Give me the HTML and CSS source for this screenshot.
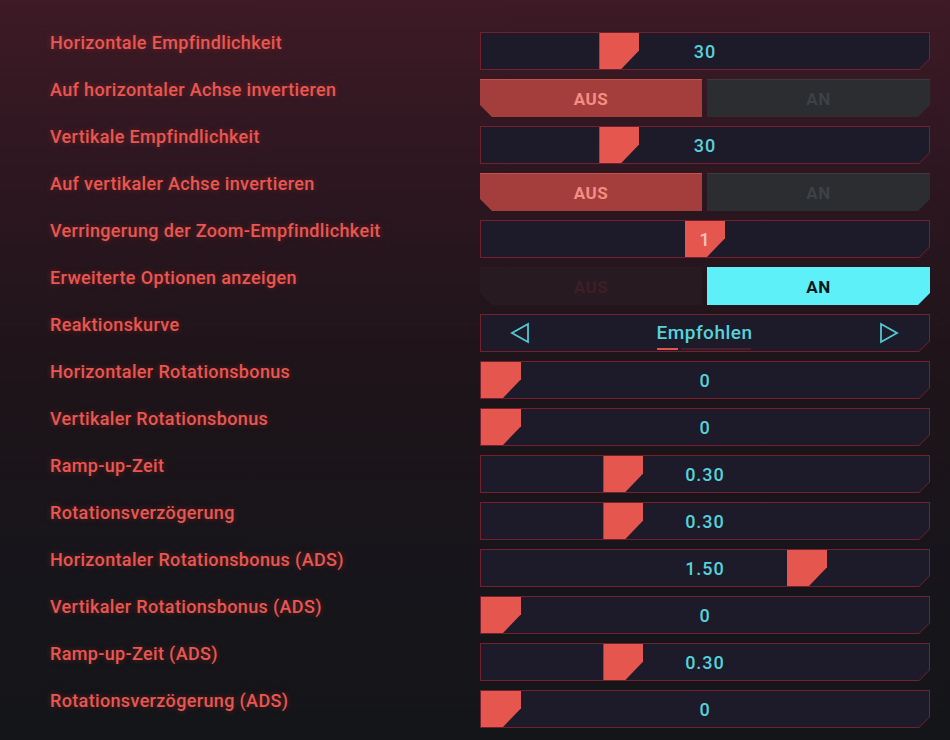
FILE: index.html
```html
<!DOCTYPE html>
<html lang="de">

<head>
    <meta charset="UTF-8">
    <meta name="viewport" content="width=device-width, initial-scale=1.0">
    <link rel="stylesheet" href="styles.css">
</head>

<body>
    <div class="settings">

        <div class="row">
            <div class="label">Horizontale Empfindlichkeit</div>
            <div class="field">
                <div class="field-in slider">
                    <div class="thumb" style="--p: 0.29"></div>
                    <span class="value">30</span>
                </div>
            </div>
        </div>

        <div class="row">
            <div class="label">Auf horizontaler Achse invertieren</div>
            <div class="toggle">
                <div class="opt opt-left off-on">AUS</div>
                <div class="opt opt-right on-off">AN</div>
            </div>
        </div>

        <div class="row">
            <div class="label">Vertikale Empfindlichkeit</div>
            <div class="field">
                <div class="field-in slider">
                    <div class="thumb" style="--p: 0.29"></div>
                    <span class="value">30</span>
                </div>
            </div>
        </div>

        <div class="row">
            <div class="label">Auf vertikaler Achse invertieren</div>
            <div class="toggle">
                <div class="opt opt-left off-on">AUS</div>
                <div class="opt opt-right on-off">AN</div>
            </div>
        </div>

        <div class="row">
            <div class="label">Verringerung der Zoom-Empfindlichkeit</div>
            <div class="field">
                <div class="field-in slider">
                    <div class="thumb" style="--p: 0.5"></div>
                    <span class="value value-over">1</span>
                </div>
            </div>
        </div>

        <div class="row">
            <div class="label">Erweiterte Optionen anzeigen</div>
            <div class="toggle">
                <div class="opt opt-left dim-off">AUS</div>
                <div class="opt opt-right cyan-on">AN</div>
            </div>
        </div>

        <div class="row">
            <div class="label">Reaktionskurve</div>
            <div class="field">
                <div class="field-in selector">
                    <svg class="arrow" width="20" height="22" viewBox="0 0 20 22">
                        <path d="M18 2 L2 11 L18 20 Z" fill="none" stroke="#4fc9d3" stroke-width="1.8" stroke-linejoin="miter"/>
                    </svg>
                    <div class="choice">
                        <span class="choice-text">Empfohlen</span>
                        <div class="pager">
                            <span class="pager-on"></span>
                            <span class="pager-off"></span>
                        </div>
                    </div>
                    <svg class="arrow" width="20" height="22" viewBox="0 0 20 22">
                        <path d="M2 2 L18 11 L2 20 Z" fill="none" stroke="#4fc9d3" stroke-width="1.8" stroke-linejoin="miter"/>
                    </svg>
                </div>
            </div>
        </div>

        <div class="row">
            <div class="label">Horizontaler Rotationsbonus</div>
            <div class="field">
                <div class="field-in slider">
                    <div class="thumb" style="--p: 0"></div>
                    <span class="value">0</span>
                </div>
            </div>
        </div>

        <div class="row">
            <div class="label">Vertikaler Rotationsbonus</div>
            <div class="field">
                <div class="field-in slider">
                    <div class="thumb" style="--p: 0"></div>
                    <span class="value">0</span>
                </div>
            </div>
        </div>

        <div class="row">
            <div class="label">Ramp-up-Zeit</div>
            <div class="field">
                <div class="field-in slider">
                    <div class="thumb" style="--p: 0.3"></div>
                    <span class="value">0.30</span>
                </div>
            </div>
        </div>

        <div class="row">
            <div class="label">Rotationsverzögerung</div>
            <div class="field">
                <div class="field-in slider">
                    <div class="thumb" style="--p: 0.3"></div>
                    <span class="value">0.30</span>
                </div>
            </div>
        </div>

        <div class="row">
            <div class="label">Horizontaler Rotationsbonus (ADS)</div>
            <div class="field">
                <div class="field-in slider">
                    <div class="thumb" style="--p: 0.75"></div>
                    <span class="value">1.50</span>
                </div>
            </div>
        </div>

        <div class="row">
            <div class="label">Vertikaler Rotationsbonus (ADS)</div>
            <div class="field">
                <div class="field-in slider">
                    <div class="thumb" style="--p: 0"></div>
                    <span class="value">0</span>
                </div>
            </div>
        </div>

        <div class="row">
            <div class="label">Ramp-up-Zeit (ADS)</div>
            <div class="field">
                <div class="field-in slider">
                    <div class="thumb" style="--p: 0.3"></div>
                    <span class="value">0.30</span>
                </div>
            </div>
        </div>

        <div class="row">
            <div class="label">Rotationsverzögerung (ADS)</div>
            <div class="field">
                <div class="field-in slider">
                    <div class="thumb" style="--p: 0"></div>
                    <span class="value">0</span>
                </div>
            </div>
        </div>

    </div>
</body>

</html>
```

FILE: styles.css
```css
html,
body {
    height: 100%;
}

body {
    margin: 0;
    font-family: Roboto, "Liberation Sans", sans-serif;
    background: linear-gradient(180deg, #3d1a25 0%, #2c1620 25%, #1e1419 50%, #17151b 75%, #141519 100%);
    overflow: hidden;
}

.settings {
    display: flex;
    flex-direction: column;
    gap: 9px;
    padding: 32px 20px 0 50px;
}

.row {
    display: grid;
    grid-template-columns: 1fr 450px;
    height: 38px;
}

.label {
    color: #ea5650;
    font-size: 18px;
    font-weight: 500;
    letter-spacing: 0.35px;
    line-height: 20px;
    padding-top: 1px;
    text-shadow: 0 0 6px rgba(236, 70, 60, 0.35);
}

/* outlined boxes with the cut corner */

.field {
    background: #74202e;
    padding: 1px;
    clip-path: polygon(0 0, 100% 0, 100% calc(100% - 11px), calc(100% - 11px) 100%, 0 100%);
}

.field-in {
    position: relative;
    height: 100%;
    background: #1d1b29;
    clip-path: polygon(0 0, 100% 0, 100% calc(100% - 10px), calc(100% - 10px) 100%, 0 100%);
}

.slider {
    display: flex;
    align-items: center;
    justify-content: center;
}

.thumb {
    position: absolute;
    top: 0;
    bottom: 0;
    width: 40px;
    left: calc(var(--p) * (100% - 40px));
    background: #e5564f;
    clip-path: polygon(0 0, 100% 0, 100% 48%, 55% 100%, 0 100%);
}

.value {
    position: relative;
    color: #57d2dc;
    font-size: 18px;
    font-weight: 500;
    letter-spacing: 1px;
}

.value-over {
    color: #f6c4bc;
}

/* AUS / AN switch */

.toggle {
    display: grid;
    grid-template-columns: 222px 1fr;
    gap: 5px;
}

.opt {
    display: flex;
    align-items: center;
    justify-content: center;
    font-size: 17px;
    font-weight: bold;
    letter-spacing: 0.5px;
    border-top: 1px solid transparent;
}

.opt-left {
    clip-path: polygon(0 0, 100% 0, 100% 100%, 12px 100%, 0 calc(100% - 12px));
}

.opt-right {
    clip-path: polygon(0 0, 100% 0, 100% calc(100% - 12px), calc(100% - 12px) 100%, 0 100%);
}

.off-on {
    background: #a33e3d;
    border-top-color: #c4514d;
    color: #f48e84;
}

.on-off {
    background: #2b2d31;
    border-top-color: #393b3f;
    color: #3c4246;
}

.dim-off {
    background: #271a20;
    color: #3e1f26;
}

.cyan-on {
    background: #5ef0f8;
    color: #0e1620;
}

/* Reaktionskurve picker */

.selector {
    display: flex;
    align-items: center;
    justify-content: space-between;
    padding: 0 30px 0 29px;
}

.arrow {
    display: block;
}

.choice {
    display: flex;
    flex-direction: column;
    align-items: center;
    padding-top: 6px;
}

.choice-text {
    color: #57d2dc;
    font-size: 19px;
    font-weight: 500;
    letter-spacing: 0.5px;
    line-height: 22px;
}

.pager {
    display: flex;
    gap: 3px;
    margin-top: 4px;
}

.pager-on {
    width: 21px;
    height: 2px;
    background: #e0564f;
}

.pager-off {
    width: 70px;
    height: 2px;
    background: #4a1f2a;
}
```
